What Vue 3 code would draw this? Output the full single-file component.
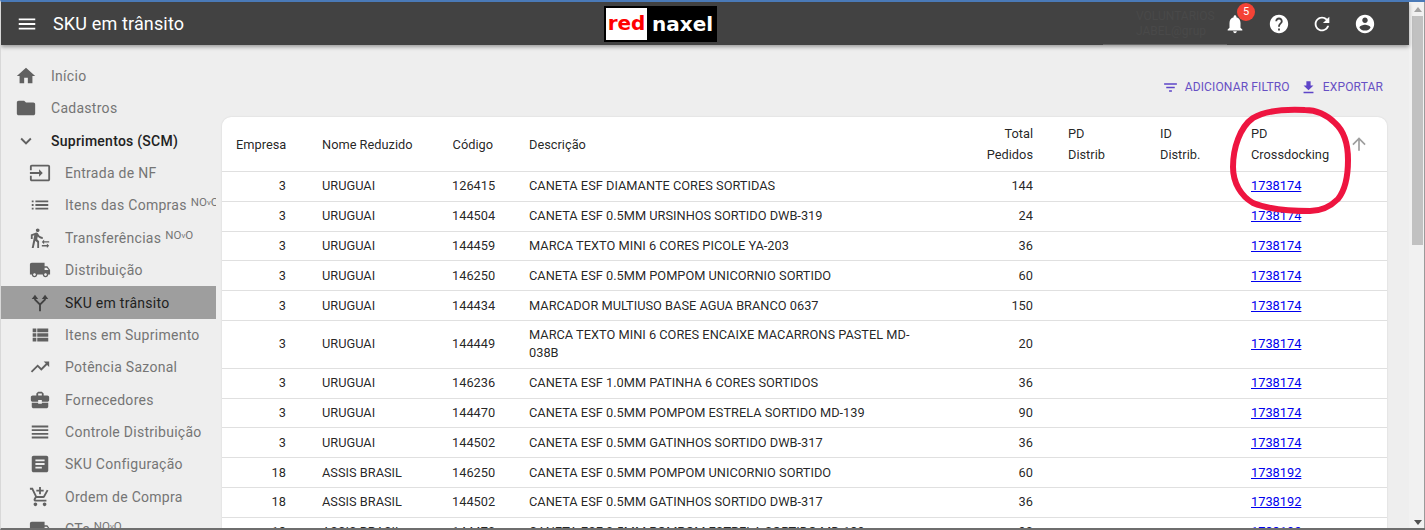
<script setup>
const P = {
  home: 'M10 20v-6h4v6h5v-8h3L12 3 2 12h3v8z',
  folder: 'M10 4H4c-1.1 0-1.99.9-1.99 2L2 18c0 1.1.9 2 2 2h16c1.1 0 2-.9 2-2V8c0-1.1-.9-2-2-2h-8l-2-2z',
  expand: 'M16.59 8.59L12 13.17 7.41 8.59 6 10l6 6 6-6z',
  input: 'M21 3.01H3c-1.1 0-2 .9-2 2V9h2V4.99h18v14.03H3V15H1v4.01c0 1.1.9 1.98 2 1.98h18c1.1 0 2-.88 2-1.98v-14c0-1.11-.9-2-2-2zM11 16l4-4-4-4v3H1v2h10v3z',
  list: 'M3 13h2v-2H3v2zm0 4h2v-2H3v2zm0-8h2V7H3v2zm4 4h14v-2H7v2zm0 4h14v-2H7v2zM7 7v2h14V7H7z',
  transfer: 'M16.49 15.5v-1.75L14 16.25l2.49 2.5V17H22v-1.5zm3.02 4.25H14v1.5h5.51V23L22 20.5 19.51 18zM9.5 5.5c1.1 0 2-.9 2-2s-.9-2-2-2-2 .9-2 2 .9 2 2 2zM5.75 8.9L3 23h2.1l1.75-8L9 17v6h2v-7.55L8.95 13.4l.6-3C10.85 12 12.8 13 15 13v-2c-1.85 0-3.45-1-4.35-2.45l-.95-1.6C9.35 6.35 8.7 6 8 6c-.25 0-.5.05-.75.15L2 8.3V13h2V9.65l1.75-.75',
  truck: 'M20 8h-3V4H3c-1.1 0-2 .9-2 2v11h2c0 1.66 1.34 3 3 3s3-1.34 3-3h6c0 1.66 1.34 3 3 3s3-1.34 3-3h2v-5l-3-4zM6 18.5c-.83 0-1.5-.67-1.5-1.5s.67-1.5 1.5-1.5 1.5.67 1.5 1.5-.67 1.5-1.5 1.5zm13.5-9l1.96 2.5H17V9.5h2.500zm-1.5 9c-.83 0-1.5-.67-1.5-1.5s.67-1.5 1.5-1.5 1.5.67 1.5 1.5-.67 1.5-1.5 1.5z',
  split: 'M6.500 3L3 7.500h2.600v1.100L11 14.200V21h2v-6.800l5.400-5.600V7.500H21L17.500 3 14 7.500h2.400v.3L12 12.400 7.600 7.800v-.3H10z',
  viewList: 'M4 14h4v-4H4v4zm0 5h4v-4H4v4zM4 9h4V5H4v4zm5 5h12v-4H9v4zm0 5h12v-4H9v4zM9 5v4h12V5H9z',
  trend: 'M16 6l2.29 2.29-4.88 4.88-4-4L2 16.59 3.41 18l6-6 4 4 6.3-6.29L22 12V6z',
  case: 'M10 16v-1H3.01L3 19c0 1.11.89 2 2 2h14c1.11 0 2-.89 2-2v-4h-7v1h-4zm10-9h-4.01V5l-2-2h-4l-2 2v2H4c-1.1 0-2 .9-2 2v3c0 1.11.89 2 2 2h6v-2h4v2h6c1.1 0 2-.9 2-2V9c0-1.1-.9-2-2-2zm-6 0h-4V5h4v2z',
  reorder: 'M3 15h18v-2H3v2zm0 4h18v-2H3v2zm0-8h18V9H3v2zm0-6v2h18V5H3z',
  doc: 'M19 3H5c-1.1 0-2 .9-2 2v14c0 1.1.9 2 2 2h14c1.1 0 2-.9 2-2V5c0-1.1-.9-2-2-2zm-5 14H7v-2h7v2zm3-4H7v-2h10v2zm0-4H7V7h10v2z',
  cart: 'M11 9h2V6h3V4h-3V1h-2v3H8v2h3v3zm-4 9c-1.1 0-1.99.9-1.99 2S5.9 22 7 22s2-.9 2-2-.9-2-2-2zm10 0c-1.1 0-1.99.9-1.99 2s.89 2 1.99 2 2-.9 2-2-.9-2-2-2zm-9.83-3.25l.03-.12.9-1.63h7.45c.75 0 1.41-.41 1.75-1.03l3.86-7.01L19.42 4h-.01l-1.1 2-2.76 5H8.53l-.13-.27L6.16 6l-.95-2-.94-2H1v2h2l3.6 7.59-1.35 2.45c-.16.28-.25.61-.25.96 0 1.1.9 2 2 2h12v-2H7.42c-.13 0-.25-.11-.25-.25z',
  menu: 'M3 18h18v-2H3v2zm0-5h18v-2H3v2zm0-7v2h18V6H3z',
  filter: 'M10 18h4v-2h-4v2zM3 6v2h18V6H3zm3 7h12v-2H6v2z',
  download: 'M19 9h-4V3H9v6H5l7 7 7-7zM5 18v2h14v-2H5z',
  bell: 'M12 22c1.1 0 2-.9 2-2h-4c0 1.1.89 2 2 2zm6-6v-5c0-3.07-1.64-5.64-4.5-6.32V4c0-.83-.67-1.5-1.5-1.5s-1.5.67-1.5 1.5v.68C7.63 5.36 6 7.92 6 11v5l-2 2v1h16v-1l-2-2z',
  help: 'M12 2C6.48 2 2 6.48 2 12s4.48 10 10 10 10-4.48 10-10S17.52 2 12 2zm1 17h-2v-2h2v2zm2.07-7.75l-.9.92C13.45 12.9 13 13.5 13 15h-2v-.5c0-1.1.45-2.1 1.17-2.83l1.24-1.26c.37-.36.59-.86.59-1.41 0-1.1-.9-2-2-2s-2 .9-2 2H8c0-2.21 1.79-4 4-4s4 1.79 4 4c0 .88-.36 1.68-.93 2.25z',
  refresh: 'M17.65 6.35C16.2 4.9 14.21 4 12 4c-4.42 0-7.99 3.58-7.99 8s3.57 8 7.99 8c3.73 0 6.84-2.55 7.73-6h-2.08c-.82 2.33-3.04 4-5.65 4-3.31 0-6-2.69-6-6s2.69-6 6-6c1.66 0 3.14.69 4.22 1.78L13 11h7V4l-2.35 2.35z',
  account: 'M12 2C6.48 2 2 6.48 2 12s4.48 10 10 10 10-4.48 10-10S17.52 2 12 2zm0 3c1.66 0 3 1.34 3 3s-1.34 3-3 3-3-1.34-3-3 1.34-3 3-3zm0 14.2c-2.5 0-4.71-1.28-6-3.22.03-1.99 4-3.08 6-3.08 1.99 0 5.97 1.09 6 3.08-1.29 1.94-3.5 3.22-6 3.22z',
  up: 'M4 12l1.41 1.41L11 7.83V20h2V7.83l5.58 5.59L20 12l-8-8-8 8z'
}

const nav = [
  { label: 'Início', icon: P.home },
  { label: 'Cadastros', icon: P.folder },
  { label: 'Suprimentos (SCM)', icon: P.expand, group: true },
  { label: 'Entrada de NF', icon: P.input, sub: true },
  { label: 'Itens das Compras', icon: P.list, sub: true, tag: true },
  { label: 'Transferências', icon: P.transfer, sub: true, tag: true },
  { label: 'Distribuição', icon: P.truck, sub: true },
  { label: 'SKU em trânsito', icon: P.split, sub: true, active: true },
  { label: 'Itens em Suprimento', icon: P.viewList, sub: true },
  { label: 'Potência Sazonal', icon: P.trend, sub: true },
  { label: 'Fornecedores', icon: P.case, sub: true },
  { label: 'Controle Distribuição', icon: P.reorder, sub: true },
  { label: 'SKU Configuração', icon: P.doc, sub: true },
  { label: 'Ordem de Compra', icon: P.cart, sub: true },
  { label: 'CTe', icon: P.truck, sub: true, tag: true }
]

const rows = [
  [3, 'URUGUAI', 126415, 'CANETA ESF DIAMANTE CORES SORTIDAS', 144, 1738174],
  [3, 'URUGUAI', 144504, 'CANETA ESF 0.5MM URSINHOS SORTIDO DWB-319', 24, 1738174],
  [3, 'URUGUAI', 144459, 'MARCA TEXTO MINI 6 CORES PICOLE YA-203', 36, 1738174],
  [3, 'URUGUAI', 146250, 'CANETA ESF 0.5MM POMPOM UNICORNIO SORTIDO', 60, 1738174],
  [3, 'URUGUAI', 144434, 'MARCADOR MULTIUSO BASE AGUA BRANCO 0637', 150, 1738174],
  [3, 'URUGUAI', 144449, 'MARCA TEXTO MINI 6 CORES ENCAIXE MACARRONS PASTEL MD-038B', 20, 1738174],
  [3, 'URUGUAI', 146236, 'CANETA ESF 1.0MM PATINHA 6 CORES SORTIDOS', 36, 1738174],
  [3, 'URUGUAI', 144470, 'CANETA ESF 0.5MM POMPOM ESTRELA SORTIDO MD-139', 90, 1738174],
  [3, 'URUGUAI', 144502, 'CANETA ESF 0.5MM GATINHOS SORTIDO DWB-317', 36, 1738174],
  [18, 'ASSIS BRASIL', 146250, 'CANETA ESF 0.5MM POMPOM UNICORNIO SORTIDO', 60, 1738192],
  [18, 'ASSIS BRASIL', 144502, 'CANETA ESF 0.5MM GATINHOS SORTIDO DWB-317', 36, 1738192],
  [18, 'ASSIS BRASIL', 144470, 'CANETA ESF 0.5MM POMPOM ESTRELA SORTIDO MD-139', 90, 1738192]
]
</script>

<template>
  <div class="window">
    <div class="page">
      <header class="appbar">
        <svg class="menu" viewBox="0 0 24 24"><path :d="P.menu" /></svg>
        <div class="title">SKU em trânsito</div>
        <div class="logo"><span class="logo-red">red</span><span class="logo-white">naxel</span></div>
        <div class="spacer"></div>
        <div class="user"><span>VOLUNTARIOS</span><span>JABEL@grup</span></div>
        <div class="action bell">
          <svg viewBox="0 0 24 24"><path :d="P.bell" /></svg>
          <span class="badge">5</span>
        </div>
        <div class="action"><svg viewBox="0 0 24 24"><path :d="P.help" /></svg></div>
        <div class="action"><svg viewBox="0 0 24 24"><path :d="P.refresh" /></svg></div>
        <div class="action"><svg viewBox="0 0 24 24"><path :d="P.account" /></svg></div>
      </header>
      <div class="body">
        <nav class="sidebar">
          <div
            v-for="item in nav"
            :key="item.label"
            class="nav-item"
            :class="{ sub: item.sub, group: item.group, active: item.active }"
          >
            <svg class="nav-icon" viewBox="0 0 24 24"><path :d="item.icon" /></svg>
            <span class="nav-label">{{ item.label }}</span>
            <span v-if="item.tag" class="tag">NO<small>v</small>O</span>
          </div>
        </nav>
        <main class="main">
          <div class="toolbar">
            <div class="tool">
              <svg viewBox="0 0 24 24"><path :d="P.filter" /></svg>
              <span>Adicionar filtro</span>
            </div>
            <div class="tool">
              <svg viewBox="0 0 24 24"><path :d="P.download" /></svg>
              <span>Exportar</span>
            </div>
          </div>
          <div class="card">
            <table>
              <colgroup>
                <col class="c1" /><col class="c2" /><col class="c3" /><col class="c4" />
                <col class="c5" /><col class="c6" /><col class="c7" /><col class="c8" />
              </colgroup>
              <thead>
                <tr>
                  <th class="right">Empresa</th>
                  <th>Nome Reduzido</th>
                  <th class="right">Código</th>
                  <th>Descrição</th>
                  <th class="right">Total<br />Pedidos</th>
                  <th>PD<br />Distrib</th>
                  <th>ID<br />Distrib.</th>
                  <th>
                    <div class="sorted">
                      <span>PD<br />Crossdocking</span>
                      <svg viewBox="0 0 24 24"><path :d="P.up" /></svg>
                    </div>
                  </th>
                </tr>
              </thead>
              <tbody>
                <tr v-for="(r, i) in rows" :key="i">
                  <td class="right">{{ r[0] }}</td>
                  <td>{{ r[1] }}</td>
                  <td class="right">{{ r[2] }}</td>
                  <td>{{ r[3] }}</td>
                  <td class="right">{{ r[4] }}</td>
                  <td></td>
                  <td></td>
                  <td><a href="#">{{ r[5] }}</a></td>
                </tr>
              </tbody>
            </table>
          </div>
        </main>
      </div>
    </div>
    <div class="scrollbar">
      <i class="arrow-up"></i>
      <div class="thumb"></div>
      <i class="arrow-down"></i>
    </div>
    <svg class="ring" viewBox="0 0 1425 530">
      <path d="M1305 110C1285 109 1265 111 1253 118C1240 127 1233 148 1233 167C1233 183 1241 196 1253 203C1270 210 1292 211 1310 211C1322 211 1331 206 1338 199C1346 189 1348 175 1348 160C1348 145 1344 131 1335 123C1327 115 1316 110 1305 110Z" />
    </svg>
  </div>
</template>

<style>
html, body { margin: 0; background: #eeeeee; overflow: hidden; }
</style>

<style scoped>
.window {
  position: relative;
  width: 1425px;
  height: 530px;
  box-sizing: border-box;
  display: flex;
  overflow: hidden;
  background: #eeeeee;
  border-top: 2px solid #4a7ab8;
  border-left: 1px solid #d8d8d8;
  border-bottom: 2px solid #6e6e6e;
  font-family: Roboto, "Liberation Sans", sans-serif;
}
.page {
  flex: 1;
  min-width: 0;
  display: flex;
  flex-direction: column;
}
.appbar {
  position: relative;
  z-index: 2;
  flex: none;
  height: 43px;
  display: flex;
  align-items: center;
  background: #424242;
  color: #fff;
  box-shadow: 0 2px 4px rgba(0, 0, 0, 0.35);
}
.menu {
  width: 22px;
  height: 22px;
  margin-left: 15px;
  margin-right: 15px;
  fill: #fff;
  flex: none;
}
.title {
  width: 551px;
  flex: none;
  font-size: 18px;
  letter-spacing: 0.15px;
}
.logo {
  flex: none;
  width: 113px;
  height: 36px;
  box-sizing: border-box;
  padding: 2px;
  background: #000;
  display: flex;
  align-items: center;
  font-family: "DejaVu Sans", sans-serif;
  font-weight: 700;
  font-size: 20px;
  letter-spacing: 0;
}
.logo-red {
  width: 41px;
  height: 32px;
  background: #fff;
  color: #ff0000;
  line-height: 31px;
  text-align: center;
  flex: none;
}
.logo-white {
  margin-left: 5px;
  color: #fff;
}
.spacer { flex: 1; }
.user {
  flex: none;
  width: 124px;
  height: 100%;
  box-sizing: border-box;
  padding: 5px 0 4px 33px;
  display: flex;
  flex-direction: column;
  justify-content: center;
  color: #494949;
  font-size: 12px;
  line-height: 15px;
  border-bottom: 1px solid #646464;
}
.action {
  position: relative;
  flex: none;
  width: 43px;
  height: 24px;
  display: flex;
  justify-content: center;
  margin-top: 1px;
}
.action svg { width: 22px; height: 24px; fill: #fff; }
.action:last-child { margin-right: 23px; }
.bell { margin-left: -14px; margin-right: 1px; }
.badge {
  position: absolute;
  left: 24px;
  top: -9px;
  width: 18px;
  height: 18px;
  border-radius: 50%;
  background: #f44336;
  color: #fff;
  font-size: 11px;
  line-height: 17px;
  text-align: center;
}
.body {
  flex: 1;
  min-height: 0;
  display: flex;
  overflow: hidden;
}
.sidebar {
  flex: none;
  width: 221px;
  padding-top: 14.6px;
}
.nav-item {
  width: 215px;
  height: 32.4px;
  padding-left: 14px;
  box-sizing: border-box;
  display: flex;
  align-items: center;
  overflow: hidden;
  white-space: nowrap;
  color: #757575;
  font-size: 14px;
  letter-spacing: 0.28px;
}
.nav-item.sub { padding-left: 28px; }
.nav-icon {
  flex: none;
  width: 22px;
  height: 22px;
  margin-right: 14px;
  fill: #616161;
}
.nav-item.group { color: #212121; font-weight: 500; letter-spacing: 0.25px; }
.nav-item.active { background: #9e9e9e; color: #212121; }
.nav-item.active .nav-icon { fill: #424242; }
.tag {
  flex: none;
  margin-left: 4px;
  margin-top: -6px;
  font-size: 11.5px;
  letter-spacing: 0;
}
.tag small { font-size: 8px; vertical-align: 1px; }
.main {
  flex: 1;
  min-width: 0;
  padding-right: 22px;
}
.toolbar {
  height: 72px;
  box-sizing: border-box;
  padding: 32px 4px 0 0;
  display: flex;
  justify-content: flex-end;
  gap: 10px;
}
.tool {
  height: 20px;
  display: flex;
  align-items: center;
  gap: 6px;
  color: #6750c4;
  font-size: 12px;
  font-weight: 400;
  letter-spacing: 0.15px;
  text-transform: uppercase;
}
.tool svg { width: 17px; height: 17px; fill: #5e45c8; }
.card {
  background: #fff;
  border-radius: 9px 9px 0 0;
  box-shadow: 0 0 2px rgba(0, 0, 0, 0.12);
}
table {
  width: 100%;
  table-layout: fixed;
  border-collapse: separate;
  border-spacing: 0;
  font-size: 12.8px;
  color: rgba(0, 0, 0, 0.87);
}
.c1 { width: 82px; }
.c2 { width: 130px; }
.c3 { width: 77px; }
.c4 { width: 440px; }
.c5 { width: 99px; }
.c6 { width: 92px; }
.c7 { width: 91px; }
th, td {
  padding: 5.4px 18px;
  border-bottom: 1px solid #e0e0e0;
  text-align: left;
  font-weight: 400;
  line-height: 18px;
}
th:first-child, td:first-child { padding-left: 14px; }
th:nth-child(5), td:nth-child(5) { padding-right: 17px; }
th {
  height: 55px;
  box-sizing: border-box;
  line-height: 21px;
}
td {
  height: 29.8px;
  box-sizing: border-box;
}
.right { text-align: right; }
a { color: #0000ee; text-decoration: underline; }
.sorted {
  display: flex;
  align-items: center;
  gap: 20px;
}
.sorted span { flex: none; }
.sorted svg { width: 20px; height: 20px; fill: #9e9e9e; flex: none; }
.scrollbar {
  position: relative;
  flex: none;
  background: #f1f1f1;
  border-right: 1px solid #9a9a9a;
  box-sizing: content-box;
  width: 15px;
  display: flex;
  flex-direction: column;
  align-items: flex-start;
}
.thumb {
  position: absolute;
  left: 3px;
  top: 14px;
  width: 11px;
  height: 229px;
  background: #c1c1c1;
}
.arrow-up,
.arrow-down {
  position: absolute;
  left: 5px;
  width: 0;
  height: 0;
  border-left: 4px solid transparent;
  border-right: 4px solid transparent;
}
.arrow-up { top: 5px; border-bottom: 5px solid #a3a3a3; }
.arrow-down { bottom: 3px; border-top: 5px solid #505050; }
.ring {
  position: absolute;
  left: -1px;
  top: -2px;
  width: 1425px;
  height: 530px;
  pointer-events: none;
  z-index: 3;
}
.ring path {
  fill: none;
  stroke: #ee1540;
  stroke-width: 6;
}
</style>
